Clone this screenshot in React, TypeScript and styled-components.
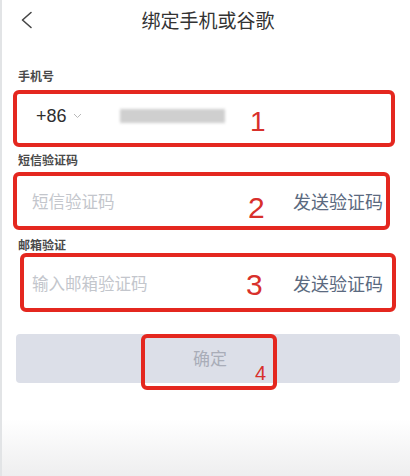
import styled, { createGlobalStyle } from 'styled-components';

const GlobalStyle = createGlobalStyle`
    html, body {
        margin: 0;
        padding: 0;
        background: #ffffff;
    }
    body {
        font-family: "Noto Sans CJK SC", "Liberation Sans", sans-serif;
    }
`;

const Page = styled.div`
    position: relative;
    width: 410px;
    height: 476px;
    box-sizing: border-box;
    border-left: 2px solid #e2e4e6;
    overflow: hidden;
    background: linear-gradient(to bottom, #ffffff 0%, #ffffff 88%, #eeeeef 100%);
`;

const Header = styled.div`
    display: grid;
    grid-template-columns: 40px 1fr 40px;
    align-items: center;
    height: 40px;
`;

const BackButton = styled.div`
    display: flex;
    align-items: center;
    padding-left: 18px;
    height: 40px;
`;

const Title = styled.div`
    text-align: center;
    font-size: 19px;
    line-height: 40px;
    font-weight: 400;
    color: #333333;
    padding-left: 4px;
`;

const Label = styled.div<{ $top: number }>`
    margin: ${props => props.$top}px 0 0 16px;
    font-size: 12px;
    line-height: 16px;
    font-weight: 700;
    color: #4a4a4a;
`;

interface BoxProps {
    $top: number;
    $left: number;
    $width: number;
    $height: number;
    $padLeft: number;
    $padRight: number;
}

const FieldBox = styled.div<BoxProps>`
    position: relative;
    display: flex;
    align-items: center;
    box-sizing: border-box;
    margin: ${props => props.$top}px 0 0 ${props => props.$left}px;
    width: ${props => props.$width}px;
    height: ${props => props.$height}px;
    padding: 0 ${props => props.$padRight}px 0 ${props => props.$padLeft}px;
    border: 4px solid #e4271f;
    border-radius: 6px;
`;

const Code = styled.span`
    font-family: "Liberation Sans", sans-serif;
    font-size: 18px;
    color: #2e2e2e;
    margin-bottom: 5px;
`;

const Caret = styled.span`
    display: flex;
    margin: 0 0 6px 6px;
`;

const Blurred = styled.div`
    width: 105px;
    height: 14px;
    margin: 0 0 5px 38px;
    background: #cfcfcf;
    filter: blur(1.5px);
`;

const Placeholder = styled.span`
    flex: 1;
    font-size: 16.5px;
    line-height: 24px;
    color: #c3c6cc;
`;

const SendLink = styled.span`
    font-size: 18px;
    line-height: 24px;
    color: #5b6a80;
`;

const Mark = styled.span<{ $x: number; $y: number; $size: number }>`
    position: absolute;
    left: ${props => props.$x}px;
    top: ${props => props.$y}px;
    font-family: "Liberation Sans", sans-serif;
    font-size: ${props => props.$size}px;
    line-height: 1;
    color: #d8302b;
`;

const Submit = styled.div`
    position: relative;
    display: flex;
    align-items: center;
    justify-content: center;
    margin: 22px 0 0 14px;
    width: 384px;
    height: 49px;
    border-radius: 4px;
    background: #dcdfe8;
    font-size: 17px;
    color: #a9adb8;
`;

const SubmitText = styled.span`
    margin-left: 4px;
    margin-bottom: 2px;
`;

const Highlight = styled.div`
    position: absolute;
    left: 125px;
    top: 0;
    width: 136px;
    height: 56px;
    box-sizing: border-box;
    border: 4px solid #e4271f;
    border-radius: 6px;
`;

export default function App(): JSX.Element {
    return (
        <>
            <GlobalStyle />
            <Page>
                <Header>
                    <BackButton>
                        <svg width="13" height="18" viewBox="0 0 13 18">
                            <polyline
                                points="11,1.5 2.5,9 11,16.5"
                                fill="none"
                                stroke="#454545"
                                strokeWidth="1.6"
                                strokeLinecap="round"
                                strokeLinejoin="round"
                            />
                        </svg>
                    </BackButton>
                    <Title>绑定手机或谷歌</Title>
                    <div />
                </Header>

                <Label $top={28}>手机号</Label>
                <FieldBox $top={6} $left={11} $width={382} $height={57} $padLeft={19} $padRight={10}>
                    <Code>+86</Code>
                    <Caret>
                        <svg width="9" height="6" viewBox="0 0 9 6">
                            <polyline points="1,1 4.5,4.5 8,1" fill="none" stroke="#b8b8b8" strokeWidth="1" />
                        </svg>
                    </Caret>
                    <Blurred />
                    <Mark $x={233} $y={14} $size={28}>1</Mark>
                </FieldBox>

                <Label $top={5}>短信验证码</Label>
                <FieldBox $top={4} $left={11} $width={377} $height={58} $padLeft={15} $padRight={3}>
                    <Placeholder>短信验证码</Placeholder>
                    <SendLink>发送验证码</SendLink>
                    <Mark $x={231} $y={17} $size={30}>2</Mark>
                </FieldBox>

                <Label $top={7}>邮箱验证</Label>
                <FieldBox $top={0} $left={18} $width={376} $height={59} $padLeft={8} $padRight={9}>
                    <Placeholder>输入邮箱验证码</Placeholder>
                    <SendLink>发送验证码</SendLink>
                    <Mark $x={222} $y={13} $size={30}>3</Mark>
                </FieldBox>

                <Submit>
                    <SubmitText>确定</SubmitText>
                    <Highlight>
                        <Mark $x={110} $y={25} $size={20}>4</Mark>
                    </Highlight>
                </Submit>
            </Page>
        </>
    );
}
